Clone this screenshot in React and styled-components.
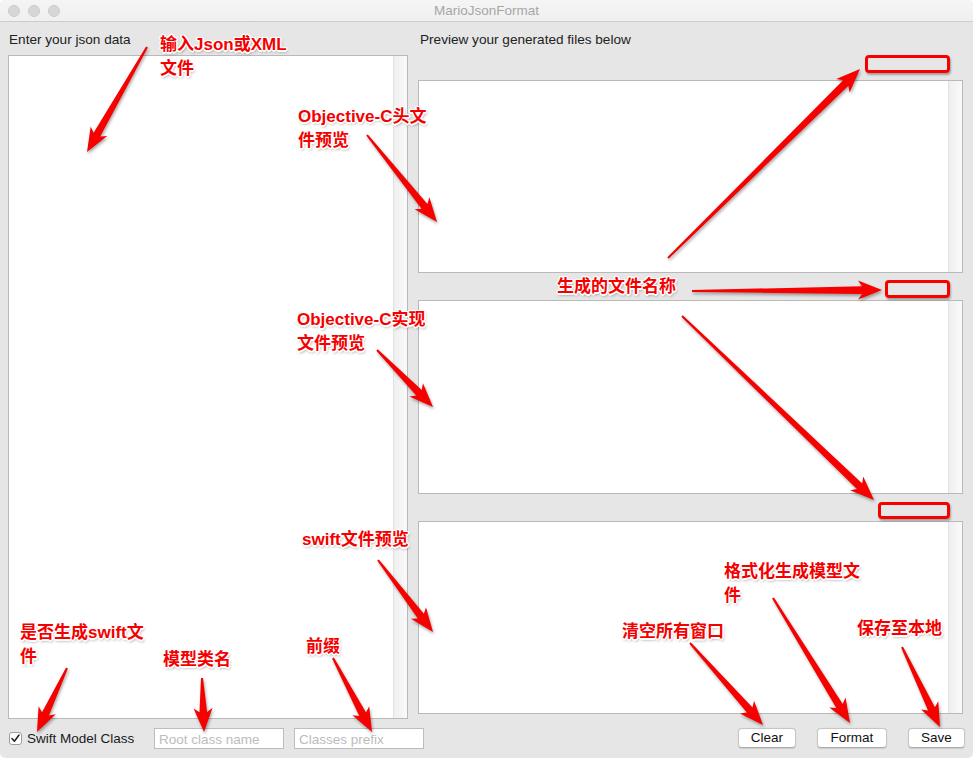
import React from "react";
import styled, { createGlobalStyle } from "styled-components";

const GlobalStyle = createGlobalStyle`
  html, body {
    margin: 0;
    padding: 0;
    background: #fff;
  }
  body {
    font-family: "Liberation Sans", Arial, sans-serif;
  }
`;

const notes = [
  { x: 160, y: 33, lines: ["输入Json或XML", "文件"] },
  { x: 298, y: 105, lines: ["Objective-C头文", "件预览"] },
  { x: 557, y: 275, lines: ["生成的文件名称"] },
  { x: 297, y: 308, lines: ["Objective-C实现", "文件预览"] },
  { x: 302, y: 528, lines: ["swift文件预览"] },
  { x: 724, y: 560, lines: ["格式化生成模型文", "件"] },
  { x: 622, y: 620, lines: ["清空所有窗口"] },
  { x: 857, y: 617, lines: ["保存至本地"] },
  { x: 20, y: 621, lines: ["是否生成swift文", "件"] },
  { x: 163, y: 648, lines: ["模型类名"] },
  { x: 306, y: 635, lines: ["前缀"] },
];

const arrows = [
  [147, 47, 87, 152],
  [367, 135, 437, 222],
  [668, 258, 860, 69],
  [692, 291, 882, 290],
  [682, 316, 874, 500],
  [377, 350, 433, 407],
  [378, 560, 433, 632],
  [773, 598, 850, 723],
  [690, 643, 763, 725],
  [902, 647, 940, 727],
  [67, 668, 37, 732],
  [202, 678, 204, 732],
  [333, 658, 372, 732],
];

const highlights = [
  { x: 865, y: 55, w: 85, h: 18 },
  { x: 885, y: 280, w: 65, h: 18 },
  { x: 878, y: 502, w: 72, h: 17 },
];

function arrowPoints([x1, y1, x2, y2]) {
  const dx = x2 - x1;
  const dy = y2 - y1;
  const len = Math.hypot(dx, dy);
  const ux = dx / len;
  const uy = dy / len;
  const nx = -uy;
  const ny = ux;
  const head = Math.min(20, len * 0.4);
  const hw = 9.5;
  const sw = 3.8;
  const tw = 1;
  const bx = x2 - ux * head;
  const by = y2 - uy * head;
  const rx = x2 - ux * (head + 4);
  const ry = y2 - uy * (head + 4);
  return [
    [x1 + nx * tw, y1 + ny * tw],
    [bx + nx * sw, by + ny * sw],
    [rx + nx * hw, ry + ny * hw],
    [x2, y2],
    [rx - nx * hw, ry - ny * hw],
    [bx - nx * sw, by - ny * sw],
    [x1 - nx * tw, y1 - ny * tw],
  ]
    .map((p) => p.map((v) => v.toFixed(1)).join(","))
    .join(" ");
}

export default function App() {
  return (
    <>
      <GlobalStyle />
      <Window>
        <TitleBar>
          <Lights>
            <Light />
            <Light />
            <Light />
          </Lights>
          <Title>MarioJsonFormat</Title>
        </TitleBar>

        <Body>
          <LeftCol>
            <Label>Enter your json data</Label>
            <Editor>
              <Scroller />
            </Editor>
            <OptionsRow>
              <CheckField>
                <CheckBox>
                  <svg width="11" height="11" viewBox="0 0 11 11">
                    <path
                      d="M2 5.6 L4.4 8.3 L9 2"
                      fill="none"
                      stroke="#222"
                      strokeWidth="1.5"
                      strokeLinecap="round"
                      strokeLinejoin="round"
                    />
                  </svg>
                </CheckBox>
                Swift Model Class
              </CheckField>
              <Field placeholder="Root class name" />
              <Field placeholder="Classes prefix" />
            </OptionsRow>
          </LeftCol>

          <RightCol>
            <Label $indent={2}>Preview your generated files below</Label>
            <FileNameRow $h={25} />
            <Editor>
              <Scroller />
            </Editor>
            <FileNameRow $h={27} />
            <Editor>
              <Scroller />
            </Editor>
            <FileNameRow $h={27} />
            <Editor>
              <Scroller />
            </Editor>
            <ButtonRow>
              <Button $w={58}>Clear</Button>
              <Button $w={70}>Format</Button>
              <Button $w={57}>Save</Button>
            </ButtonRow>
          </RightCol>
        </Body>

        <ArrowLayer width="973" height="758" viewBox="0 0 973 758">
          {arrows.map((a, i) => (
            <polygon key={i} points={arrowPoints(a)} fill="#f70000" />
          ))}
        </ArrowLayer>

        {highlights.map((h, i) => (
          <Highlight key={i} $x={h.x} $y={h.y} $w={h.w} $h={h.h} />
        ))}

        {notes.map((n, i) => (
          <Note key={i} $x={n.x} $y={n.y}>
            {n.lines.map((l, j) => (
              <div key={j}>{l}</div>
            ))}
          </Note>
        ))}
      </Window>
    </>
  );
}

const Window = styled.div`
  position: relative;
  width: 973px;
  height: 758px;
  display: flex;
  flex-direction: column;
  background: #e6e6e6;
  border-radius: 5px;
  overflow: hidden;
`;

const TitleBar = styled.div`
  height: 21px;
  flex-shrink: 0;
  display: flex;
  align-items: center;
  padding-left: 8px;
  background: linear-gradient(#f5f5f5, #efefef);
  border-bottom: 1px solid #cdcdcd;
`;

const Lights = styled.div`
  display: flex;
  gap: 8px;
`;

const Light = styled.span`
  width: 12px;
  height: 12px;
  box-sizing: border-box;
  border-radius: 50%;
  background: #d7d7d7;
  border: 1px solid #cacaca;
`;

const Title = styled.div`
  flex: 1;
  padding-right: 60px;
  text-align: center;
  font-size: 13.5px;
  color: #a6a6a6;
`;

const Body = styled.div`
  flex: 1;
  min-height: 0;
  display: flex;
  gap: 10px;
  padding: 0 10px 9px 8px;
`;

const LeftCol = styled.div`
  width: 400px;
  flex-shrink: 0;
  display: flex;
  flex-direction: column;
`;

const RightCol = styled.div`
  flex: 1;
  display: flex;
  flex-direction: column;
  padding-bottom: 1px;
`;

const Label = styled.div`
  padding: 10px 0 7px ${(p) => p.$indent || 1}px;
  font-size: 13.6px;
  line-height: 16px;
  color: #222;
`;

const Editor = styled.div`
  flex: 1;
  min-height: 0;
  display: flex;
  justify-content: flex-end;
  background: #fff;
  border: 1px solid #b9b9b9;
`;

const Scroller = styled.div`
  width: 13px;
  background: linear-gradient(to right, #efefef, #fafafa);
  border-left: 1px solid #e2e2e2;
`;

const FileNameRow = styled.div`
  height: ${(p) => p.$h}px;
  flex-shrink: 0;
`;

const OptionsRow = styled.div`
  height: 21px;
  margin-top: 9px;
  display: flex;
  align-items: center;
  flex-shrink: 0;
`;

const CheckField = styled.label`
  width: 145px;
  flex-shrink: 0;
  display: flex;
  align-items: center;
  gap: 5px;
  padding-left: 1px;
  font-size: 13.5px;
  color: #1a1a1a;
`;

const CheckBox = styled.span`
  width: 13px;
  height: 13px;
  box-sizing: border-box;
  display: flex;
  align-items: center;
  justify-content: center;
  background: #fff;
  border: 1px solid #9e9e9e;
  border-radius: 3px;
`;

const Field = styled.input`
  width: 130px;
  height: 21px;
  flex-shrink: 0;
  box-sizing: border-box;
  margin: 0 10px 0 0;
  padding: 1px 4px 0;
  background: #fff;
  border: 1px solid #bdbdbd;
  border-radius: 0;
  outline: none;
  font-family: "Liberation Sans", Arial, sans-serif;
  font-size: 13.5px;
  color: #222;

  &::placeholder {
    color: #bcbcbc;
  }
`;

const ButtonRow = styled.div`
  height: 20px;
  margin: 14px -2px 0 0;
  display: flex;
  justify-content: flex-end;
  gap: 21px;
  flex-shrink: 0;
`;

const Button = styled.button`
  width: ${(p) => p.$w}px;
  height: 20px;
  box-sizing: border-box;
  padding: 0;
  background: #fff;
  border: 1px solid #c6c6c6;
  border-bottom-color: #acacac;
  border-radius: 4px;
  box-shadow: 0 0.5px 1px rgba(0, 0, 0, 0.12);
  font-family: "Liberation Sans", Arial, sans-serif;
  font-size: 13.5px;
  color: #111;
`;

const ArrowLayer = styled.svg`
  position: absolute;
  left: 0;
  top: 0;
  pointer-events: none;
  filter: drop-shadow(1px 2px 1.5px rgba(0, 0, 0, 0.35));
`;

const Highlight = styled.div`
  position: absolute;
  left: ${(p) => p.$x}px;
  top: ${(p) => p.$y}px;
  width: ${(p) => p.$w}px;
  height: ${(p) => p.$h}px;
  box-sizing: border-box;
  border: 3px solid #f70000;
  border-radius: 4px;
  box-shadow: 1px 2px 2px rgba(0, 0, 0, 0.3);
`;

const Note = styled.div`
  position: absolute;
  left: ${(p) => p.$x}px;
  top: ${(p) => p.$y}px;
  white-space: nowrap;
  font-family: "Liberation Sans", "Noto Sans CJK SC", sans-serif;
  font-weight: 700;
  font-size: 17px;
  line-height: 24px;
  color: #f50000;
  text-shadow: -1.5px 0 0 #fff, 1.5px 0 0 #fff, 0 -1.5px 0 #fff,
    0 1.5px 0 #fff, -1px -1px 0 #fff, 1px 1px 0 #fff, 1px -1px 0 #fff,
    -1px 1px 0 #fff, 1px 2px 3px rgba(0, 0, 0, 0.45);
`;
